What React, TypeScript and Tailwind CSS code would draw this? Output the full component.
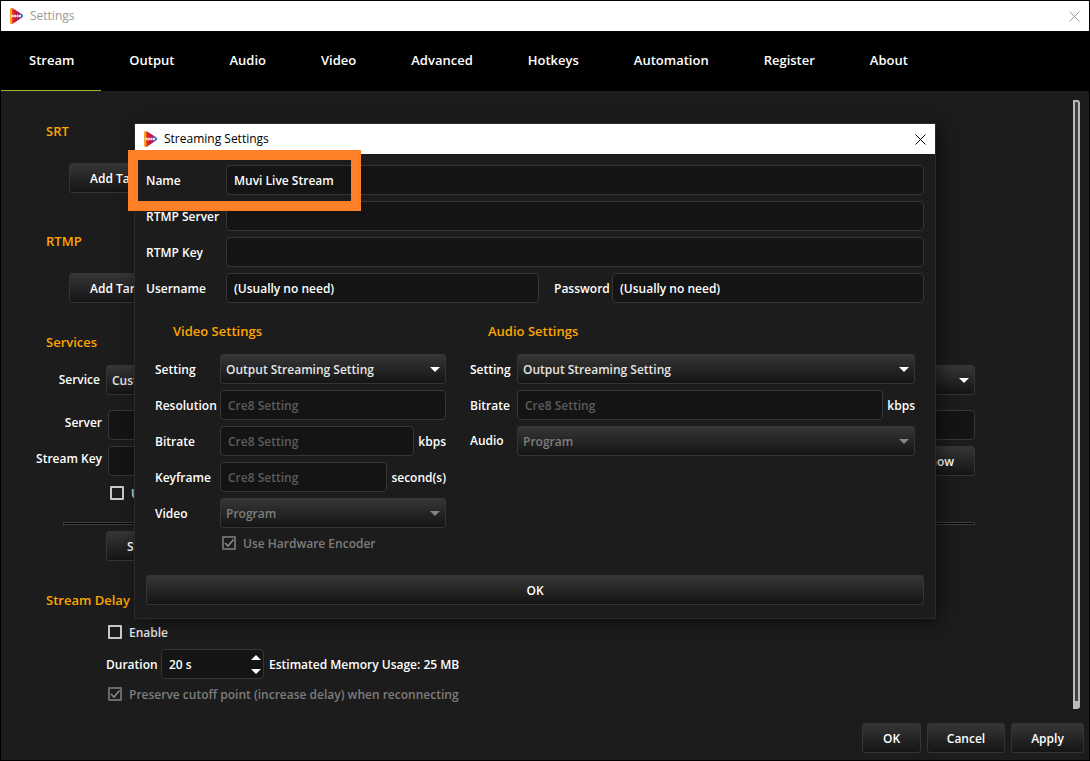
import type { InputHTMLAttributes, ReactNode } from "react";

const TABS = [
  "Stream",
  "Output",
  "Audio",
  "Video",
  "Advanced",
  "Hotkeys",
  "Automation",
  "Register",
  "About",
];

function Logo({ id }: { id: string }) {
  return (
    <svg viewBox="0 0 14 16" className="h-4 w-[14px] shrink-0" aria-hidden="true">
      <defs>
        <linearGradient id={id} x1="0" y1="0" x2="1" y2="0">
          <stop offset="0" stopColor="#f08a1c" />
          <stop offset="0.2" stopColor="#e0301f" />
          <stop offset="0.4" stopColor="#d3122f" />
          <stop offset="0.6" stopColor="#a01c6e" />
          <stop offset="0.82" stopColor="#5a3fb0" />
          <stop offset="1" stopColor="#2f8fe6" />
        </linearGradient>
      </defs>
      <path d="M0.5 0.6 Q1.8 -0.2 3.2 0.6 L12.4 6.6 Q14 8 12.4 9.2 L3.2 15.4 Q1.8 16.2 0.5 15.4 Z" fill={`url(#${id})`} />
      <path d="M0 1.2 Q0.4 0.2 2 0.2 L2 15.8 Q0.4 15.8 0 14.8 Z" fill="#f5a623" />
      <path d="M1.4 8h9.8" stroke="#fff" strokeWidth="2.6" strokeDasharray="2.1 0.4" opacity="0.85" />
    </svg>
  );
}

function CloseButton() {
  return (
    <button type="button" aria-label="Close" className="grid h-full w-[29px] place-items-center">
      <svg viewBox="0 0 11 11" className="size-[11px]" stroke="currentColor" fill="none">
        <path d="M0.5 0.5l10 10M10.5 0.5l-10 10" />
      </svg>
    </button>
  );
}

function Button({ children, className = "px-5" }: { children: ReactNode; className?: string }) {
  return (
    <button
      type="button"
      className={`h-[30px] shrink-0 rounded-[3px] border border-[#353535] bg-linear-to-b from-[#363636] to-[#151515] pt-[2px] font-semibold text-white ${className}`}
    >
      {children}
    </button>
  );
}

function TextInput({ className = "", ...props }: InputHTMLAttributes<HTMLInputElement>) {
  return (
    <input
      type="text"
      className={`h-[30px] w-0 min-w-0 flex-1 rounded-[4px] border border-[#363636] bg-[#141414] px-[7px] font-semibold text-white placeholder:text-[#5c5c5c] ${className}`}
      {...props}
    />
  );
}

function Select({ id, value, disabled }: { id: string; value: string; disabled?: boolean }) {
  return (
    <div className="relative min-w-0 flex-1">
      <select
        id={id}
        disabled={disabled}
        className="h-[30px] w-full appearance-none rounded-[3px] border border-[#353535] bg-linear-to-b from-[#363636] to-[#151515] px-[5px] pt-[2px] font-semibold text-[#e4e4e4] opacity-100 disabled:text-[#7d7d7d]"
      >
        <option>{value}</option>
      </select>
      <svg
        viewBox="0 0 10 5"
        className={`pointer-events-none absolute top-[13px] right-[6px] h-[5px] w-[10px] ${disabled ? "text-[#858585]" : "text-white"}`}
      >
        <path d="M0 0h10L5 5z" fill="currentColor" />
      </svg>
    </div>
  );
}

type CheckProps = { label: string; checked?: boolean; disabled?: boolean };

function Check({ label, checked, disabled }: CheckProps) {
  return (
    <label className={`flex h-[18px] items-center gap-[7px] ${disabled ? "text-[#7d7d7d]" : "text-[#e4e4e4]"}`}>
      <span className="relative flex size-[14px] shrink-0">
        <input
          type="checkbox"
          defaultChecked={checked}
          disabled={disabled}
          className="peer size-[14px] appearance-none rounded-[1px] border-2 border-[#c8c8c8] disabled:border-[#6a6a6a]"
        />
        <svg viewBox="0 0 14 14" className="pointer-events-none absolute inset-0 hidden size-[14px] peer-checked:block">
          <path d="M3 7l3 3 5.5-6.5" fill="none" stroke="#8a8a8a" strokeWidth="1.6" />
        </svg>
      </span>
      <span className="pt-[2px]">{label}</span>
    </label>
  );
}

function Heading({ children, className = "" }: { children: ReactNode; className?: string }) {
  return <h2 className={`text-[13px] leading-5 font-semibold text-[#ffa500] ${className}`}>{children}</h2>;
}

type RowProps = { id: string; label: string; labelClass: string; className?: string; children: ReactNode };

function Row({ id, label, labelClass, className = "", children }: RowProps) {
  return (
    <div className={`flex items-center ${className}`}>
      <label htmlFor={id} className={`shrink-0 ${labelClass}`}>
        {label}
      </label>
      {children}
    </div>
  );
}

function StreamingDialog() {
  return (
    <section
      role="dialog"
      aria-label="Streaming Settings"
      className="absolute top-[122px] right-[153px] left-[133px] border border-[#2a2a2a] bg-[#1c1c1c] shadow-[4px_4px_16px_rgba(0,0,0,0.5)]"
    >
      <header className="flex h-[30px] items-center bg-white pl-[9px] text-black">
        <Logo id="logo-dialog" />
        <h1 className="ml-[6px] flex-1 font-normal">Streaming Settings</h1>
        <CloseButton />
      </header>

      <div className="flex flex-col gap-[6px] px-[11px] pt-[11px]">
        <Row id="name" label="Name" labelClass="w-20 pt-[2px]">
          <TextInput id="name" defaultValue="Muvi Live Stream" />
        </Row>
        <Row id="rtmp-server" label="RTMP Server" labelClass="w-20 pt-[2px]">
          <TextInput id="rtmp-server" />
        </Row>
        <Row id="rtmp-key" label="RTMP Key" labelClass="w-20 pt-[2px]">
          <TextInput id="rtmp-key" />
        </Row>
        <div className="flex gap-[15px]">
          <Row id="username" label="Username" labelClass="w-20 pt-[2px]" className="w-[393px]">
            <TextInput id="username" defaultValue="(Usually no need)" />
          </Row>
          <Row id="password" label="Password" labelClass="w-[58px] pt-[2px]" className="flex-1">
            <TextInput id="password" defaultValue="(Usually no need)" />
          </Row>
        </div>
      </div>

      <div className="flex gap-6 px-5 pt-[18px]">
        <div className="flex w-[291px] flex-col gap-[6px]">
          <Heading className="mb-[7px] pl-[18px]">Video Settings</Heading>
          <Row id="video-setting" label="Setting" labelClass="w-[65px] pt-[2px]">
            <Select id="video-setting" value="Output Streaming Setting" />
          </Row>
          <Row id="resolution" label="Resolution" labelClass="w-[65px] pt-[2px]">
            <TextInput id="resolution" placeholder="Cre8 Setting" disabled />
          </Row>
          <Row id="video-bitrate" label="Bitrate" labelClass="w-[65px] pt-[2px]">
            <TextInput id="video-bitrate" placeholder="Cre8 Setting" disabled />
            <span className="ml-1 pt-[2px]">kbps</span>
          </Row>
          <Row id="keyframe" label="Keyframe" labelClass="w-[65px] pt-[2px]">
            <TextInput id="keyframe" placeholder="Cre8 Setting" disabled />
            <span className="ml-1 pt-[2px]">second(s)</span>
          </Row>
          <Row id="video-source" label="Video" labelClass="w-[65px] pt-[2px]">
            <Select id="video-source" value="Program" disabled />
          </Row>
          <div className="pl-[67px]">
            <Check label="Use Hardware Encoder" checked disabled />
          </div>
        </div>

        <div className="flex flex-1 flex-col gap-[6px]">
          <Heading className="mb-[7px] pl-[18px]">Audio Settings</Heading>
          <Row id="audio-setting" label="Setting" labelClass="w-[47px] pt-[2px]">
            <Select id="audio-setting" value="Output Streaming Setting" />
          </Row>
          <Row id="audio-bitrate" label="Bitrate" labelClass="w-[47px] pt-[2px]">
            <TextInput id="audio-bitrate" placeholder="Cre8 Setting" disabled />
            <span className="ml-1 pt-[2px]">kbps</span>
          </Row>
          <Row id="audio-source" label="Audio" labelClass="w-[47px]">
            <Select id="audio-source" value="Program" disabled />
          </Row>
        </div>
      </div>

      <div className="flex px-[11px] pt-[23px] pb-[13px]">
        <Button className="flex-1">OK</Button>
      </div>

      {/* call-out around the name field */}
      <div className="pointer-events-none absolute top-[26px] -left-[7px] h-[61px] w-[233px] border-[10px] border-[#ff7f27]" />
    </section>
  );
}

export default function App() {
  return (
    <div className="relative flex min-h-screen flex-col border border-black bg-[#1c1c1c] font-['Open_Sans','Noto_Sans',sans-serif] text-[12px] leading-[18px] font-semibold text-white">
      <header className="flex h-[30px] items-center bg-white pl-[9px] font-normal text-[#999]">
        <Logo id="logo-main" />
        <span className="ml-[6px] flex-1">Settings</span>
        <CloseButton />
      </header>

      <nav className="flex h-[60px] bg-black text-[13px]">
        {TABS.map((tab, i) => (
          <button
            key={tab}
            type="button"
            className={`border-b pr-[27px] pb-[2px] pl-7 font-semibold ${i === 0 ? "border-[#a3b432]" : "border-transparent"}`}
          >
            {tab}
          </button>
        ))}
      </nav>

      <main className="flex flex-1 pr-[9px]">
        <div className="flex-1 pt-[30px] pr-[98px]">
          <Heading className="pl-[45px]">SRT</Heading>
          <div className="mt-[22px] pl-[68px]">
            <Button>Add Target</Button>
          </div>

          <Heading className="mt-[38px] pl-[45px]">RTMP</Heading>
          <div className="mt-[22px] pl-[68px]">
            <Button>Add Target</Button>
          </div>

          <Heading className="mt-[29px] pl-[45px]">Services</Heading>
          <Row id="service" label="Service" labelClass="w-[105px] pr-[6px] text-right" className="mt-[13px]">
            <Select id="service" value="Custom" />
          </Row>
          <Row id="server" label="Server" labelClass="w-[107px] pr-[6px] pb-1 text-right" className="mt-[15px]">
            <TextInput id="server" />
          </Row>
          <Row id="stream-key" label="Stream Key" labelClass="w-[107px] pr-[6px] pb-1 text-right" className="mt-[6px]">
            <TextInput id="stream-key" className="mr-[6px]" />
            <Button>Show</Button>
          </Row>
          <div className="mt-2 pl-[109px]">
            <Check label="Use authentication" />
          </div>
          <hr className="mt-5 ml-[62px] h-[3px] border border-[#3c3c3c] bg-black" />
          <div className="mt-[6px] pl-[105px]">
            <Button>Start</Button>
          </div>

          <Heading className="mt-[29px] pl-[45px]">Stream Delay</Heading>
          <div className="mt-[13px] pl-[107px]">
            <Check label="Enable" />
          </div>
          <div className="mt-2 flex items-center pl-[105px]">
            <label htmlFor="duration" className="w-[55px] pt-[2px]">
              Duration
            </label>
            <div className="relative flex w-[103px]">
              <TextInput id="duration" defaultValue="20 s" />
              <div className="absolute inset-y-0 right-[3px] flex flex-col justify-center gap-[9px]">
                <button type="button" aria-label="Increase duration">
                  <svg viewBox="0 0 10 5" className="h-[5px] w-[10px]">
                    <path d="M0 5h10L5 0z" fill="#fff" />
                  </svg>
                </button>
                <button type="button" aria-label="Decrease duration">
                  <svg viewBox="0 0 10 5" className="h-[5px] w-[10px]">
                    <path d="M0 0h10L5 5z" fill="#fff" />
                  </svg>
                </button>
              </div>
            </div>
            <span className="ml-[5px] pt-[2px]">Estimated Memory Usage: 25 MB</span>
          </div>
          <div className="mt-[6px] pl-[107px]">
            <Check label="Preserve cutoff point (increase delay) when reconnecting" checked disabled />
          </div>
        </div>

        {/* scroll track */}
        <div className="mt-[9px] w-[7px] rounded-r-[3px] border-x-2 border-t-2 border-b-8 border-[#b9b9b9] bg-[#404040]" />
      </main>

      <footer className="flex justify-end gap-[6px] pt-[14px] pr-[5px] pb-[7px]">
        <Button className="w-[59px]">OK</Button>
        <Button className="w-[78px]">Cancel</Button>
        <Button className="w-[73px]">Apply</Button>
      </footer>

      <StreamingDialog />
    </div>
  );
}
